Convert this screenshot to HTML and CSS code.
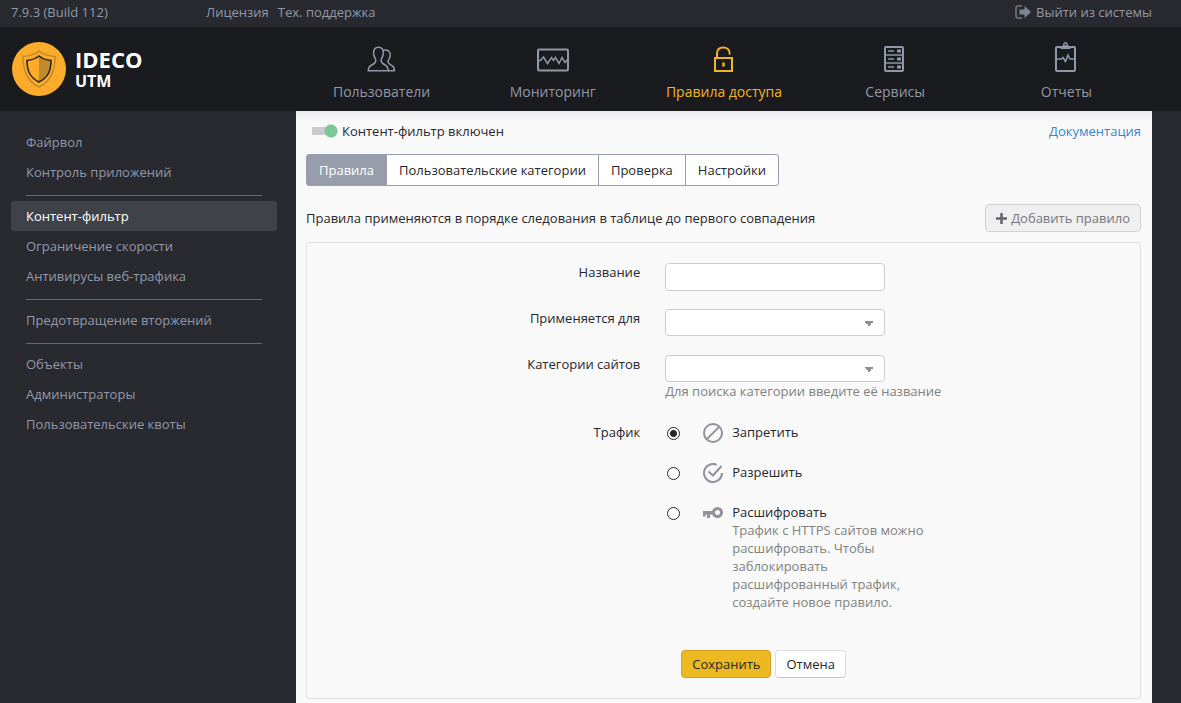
FILE: index.html
```html
<!DOCTYPE html>
<html lang="ru">
  <head>
    <meta charset="UTF-8" />
    <meta name="viewport" content="width=device-width, initial-scale=1.0" />
    <title>Контент-фильтр - Ideco UTM</title>
    <link rel="stylesheet" href="styles.css">
  </head>
  <body>
    <div class="topbar">
      <span class="version">7.9.3 (Build 112)</span>
      <div class="topbar-links">
        <a href="#">Лицензия</a>
        <a href="#">Тех. поддержка</a>
      </div>
      <a href="#" class="logout">
        <svg width="16" height="14" viewBox="0 0 16 14">
          <path d="M7 1H3a2 2 0 0 0-2 2v8a2 2 0 0 0 2 2h4" fill="none" stroke="#747985" stroke-width="1.500"/>
          <path d="M4.500 4.500h5V1l6.500 6-6.500 6V9.500h-5z" fill="#7d8794"/>
        </svg>
        Выйти из системы
      </a>
    </div>

    <header class="header">
      <a href="#" class="logo">
        <svg width="54" height="54" viewBox="0 0 54 54">
          <circle cx="27" cy="27" r="27" fill="#fcac2a"/>
          <path d="M27 9c4 3.500 10 5 16 5.500 0 13-3 24.500-16 30.500-13-6-16-17.500-16-30.500 6-.5 12-2 16-5.500z" fill="none" stroke="#c08a2a" stroke-width="1.500"/>
          <path d="M27 14v26c9-4.500 12-11 12-21.500-5-.5-9-2-12-4.500z" fill="#c08a2a"/>
          <path d="M27 14c3 2.500 7 4 12 4.500 0 10.500-3 17-12 21.500-9-4.500-12-11-12-21.500 5-.5 9-2 12-4.500z" fill="none" stroke="#24211f" stroke-width="1.500"/>
        </svg>
        <span class="logo-text">
          <span class="logo-name">IDECO</span>
          <span class="logo-product">UTM</span>
        </span>
      </a>
      <nav class="main-nav">
        <a href="#">
          <svg width="32" height="34" viewBox="0 -2 32 34" fill="none" stroke="#9198a9" stroke-width="1.500">
            <path d="M12.500 3.200c3.200 0 5 2 4.800 5.500 0 1.800-.2 3.300-1.200 4.800-.8 1.200-1.300 2.200-1 3.500.4 2 1.700 2.800 3.600 3.700 2.300 1 3.300 2.300 3.500 6H2.200c.2-3.700 1.700-5 4-6 1.900-.9 3.200-1.700 3.600-3.700.3-1.300-.3-2.300-1-3.500-1-1.500-1.200-3-1.200-4.800 0-3.500 1.700-5.500 4.900-5.500z"/>
            <path d="M17 6.300c4.200-1.200 7.300.7 7.200 4.700 0 1.800-.3 2.800-1.200 4.200-.8 1.200-1.200 2-.9 3 .4 1.500 1.500 2.100 3.200 3 2 1 3 2.300 3.200 5.500h-6.500"/>
          </svg>
          Пользователи
        </a>
        <a href="#">
          <svg width="32" height="34" viewBox="0 -2 32 34" fill="none" stroke="#9198a9">
            <rect x="1" y="5.500" width="30" height="21" rx="1" stroke-width="2"/>
            <path d="M1 16.500h2.500l3-3.500 4 6.500 4-6 2 3 2-3 3.500 6 3-6 3 5 2-2.500h1" stroke-width="1.500"/>
          </svg>
          Мониторинг
        </a>
        <a href="#" class="active">
          <svg width="32" height="34" viewBox="0 -2 32 34" fill="none" stroke="#f1b528" stroke-width="2">
            <rect x="7" y="14" width="17" height="13"/>
            <path d="M9 14v-4.500c0-4 2.800-6 6.300-6s6.300 2 6.300 5.500v1.500"/>
            <path d="M15.500 18.500v4" stroke-width="2.500"/>
          </svg>
          Правила доступа
        </a>
        <a href="#">
          <svg width="32" height="34" viewBox="0 -2 32 34" fill="none" stroke="#9198a9">
            <rect x="6" y="3" width="18" height="24" rx="1" stroke-width="2"/>
            <path d="M6 11h18M6 19h18" stroke-width="1.500"/>
            <path d="M9 7h6M9 15h6M9 23h6" stroke-width="1.500"/>
            <path d="M18 7h4M18 15h4M18 23h4" stroke-width="3"/>
          </svg>
          Сервисы
        </a>
        <a href="#">
          <svg width="32" height="34" viewBox="0 -2 32 34" fill="none" stroke="#9198a9">
            <rect x="6" y="3" width="19" height="24" rx="1" stroke-width="2"/>
            <path d="M10.500 5V2.500l2.500-1C13-.8 14-2 15.500-2S18-.8 18 1.500l2.500 1V5z" fill="#9198a9" stroke="none"/>
            <circle cx="15.500" cy=".5" r="1" fill="#1a1b1e" stroke="none"/>
            <path d="M6 15h5.500l1.500-1.500 2.500 4L18 11l2 4h5" stroke-width="1.500"/>
          </svg>
          Отчеты
        </a>
      </nav>
    </header>

    <div class="page">
      <aside class="sidebar">
        <a href="#">Файрвол</a>
        <a href="#">Контроль приложений</a>
        <hr>
        <a href="#" class="active">Контент-фильтр</a>
        <a href="#">Ограничение скорости</a>
        <a href="#">Антивирусы веб-трафика</a>
        <hr>
        <a href="#">Предотвращение вторжений</a>
        <hr>
        <a href="#">Объекты</a>
        <a href="#">Администраторы</a>
        <a href="#">Пользовательские квоты</a>
      </aside>

      <main class="content">
        <div class="content-head">
          <label class="switch">
            <input type="checkbox" checked>
            Контент-фильтр включен
          </label>
          <a href="#" class="doc-link">Документация</a>
        </div>

        <div class="tabs">
          <button type="button" class="active">Правила</button>
          <button type="button">Пользовательские категории</button>
          <button type="button">Проверка</button>
          <button type="button">Настройки</button>
        </div>

        <div class="rules-head">
          <span>Правила применяются в порядке следования в таблице до первого совпадения</span>
          <button type="button" class="btn" disabled>
            <svg width="11" height="11" viewBox="0 0 11 11">
              <path d="M5.500 0v11M0 5.500h11" stroke="#65656c" stroke-width="2.500"/>
            </svg>
            Добавить правило
          </button>
        </div>

        <form class="rule-form">
          <div class="form-row">
            <label class="form-label" for="name">Название</label>
            <div class="form-field">
              <input type="text" id="name" name="name">
            </div>
          </div>

          <div class="form-row">
            <label class="form-label" for="target">Применяется для</label>
            <div class="form-field">
              <select id="target" name="target"><option></option></select>
            </div>
          </div>

          <div class="form-row">
            <label class="form-label" for="category">Категории сайтов</label>
            <div class="form-field">
              <select id="category" name="category"><option></option></select>
              <div class="help">Для поиска категории введите её название</div>
            </div>
          </div>

          <div class="form-row traffic" role="radiogroup" aria-labelledby="trafficLabel">
            <span class="form-label" id="trafficLabel">Трафик</span>
            <div class="form-field">
              <label class="radio">
                <input type="radio" name="traffic" value="deny" checked>
                <svg width="20" height="20" viewBox="0 0 20 20" fill="none" stroke="#93909a" stroke-width="2">
                  <circle cx="10" cy="10" r="9"/>
                  <path d="M3.600 16.400 16.400 3.600"/>
                </svg>
                <span>Запретить</span>
              </label>
              <label class="radio">
                <input type="radio" name="traffic" value="allow">
                <svg width="20" height="20" viewBox="0 0 20 20" fill="none" stroke="#93909a" stroke-width="2">
                  <path d="M13.700 1.800A9 9 0 1 0 19 10"/>
                  <path d="M5.500 8.500 10 12.500 18.500 3"/>
                </svg>
                <span>Разрешить</span>
              </label>
              <label class="radio">
                <input type="radio" name="traffic" value="decrypt">
                <svg width="20" height="20" viewBox="0 0 20 20">
                  <circle cx="14.500" cy="9.500" r="4" fill="none" stroke="#93909a" stroke-width="3"/>
                  <path d="M0 8h10v3.500H7v3.500H4v-3.500H2.500v2H0z" fill="#93909a"/>
                </svg>
                <span>
                  Расшифровать
                  <span class="help">Трафик с HTTPS сайтов можно расшифровать. Чтобы заблокировать расшифрованный трафик, создайте новое правило.</span>
                </span>
              </label>
            </div>
          </div>

          <div class="form-row form-actions">
            <button type="submit" class="btn btn-primary">Сохранить</button>
            <button type="button" class="btn">Отмена</button>
          </div>
        </form>
      </main>
    </div>
  </body>
</html>
```
FILE: styles.css
```css
* {
  box-sizing: border-box;
}
body {
  margin: 0;
  min-height: 100vh;
  display: flex;
  flex-direction: column;
  font-family: "Open Sans", "Noto Sans", sans-serif;
  font-size: 13px;
  line-height: 18px;
  color: #26272c;
  background-color: #292a2f;
}
a {
  color: #9198a9;
  text-decoration: none;
}
svg {
  flex: none;
}
button,
input,
select {
  font: inherit;
  color: inherit;
}

/* top bar */
.topbar {
  display: flex;
  align-items: center;
  height: 27px;
  padding: 0 29px 3px 11px;
  color: #9198a9;
}
.version {
  width: 195px;
}
.topbar-links {
  display: flex;
  flex: 1;
  gap: 9px;
}
.logout {
  display: flex;
  align-items: center;
  gap: 5px;
}

/* header */
.header {
  display: flex;
  height: 84px;
  padding-right: 29px;
  background-color: #1a1b1e;
}
.logo {
  display: flex;
  align-items: center;
  gap: 9px;
  width: 296px;
  padding-left: 12px;
  color: #fff;
  font-weight: bold;
}
.logo-text {
  display: flex;
  flex-direction: column;
}
.logo-name {
  font-size: 22px;
  line-height: 24px;
}
.logo-product {
  font-size: 16px;
  line-height: 20px;
}
.main-nav {
  display: grid;
  grid-template-columns: repeat(5, 1fr);
  flex: 1;
}
.main-nav a {
  display: flex;
  flex-direction: column;
  align-items: center;
  gap: 7px;
  padding-top: 15px;
  font-size: 14px;
}
.main-nav .active {
  color: #f1b528;
}

/* layout */
.page {
  display: flex;
  flex: 1;
  padding-right: 29px;
}
.sidebar {
  width: 296px;
  padding: 16px 19px 16px 11px;
}
.sidebar a {
  display: block;
  padding: 6px 15px;
  border-radius: 3px;
}
.sidebar .active {
  color: #fff;
  background-color: #3f4248;
}
.sidebar hr {
  height: 1px;
  margin: 8px 15px 5px;
  border: none;
  background-color: #696a6e;
}
.content {
  flex: 1;
  padding: 11px 11px 4px 10px;
  background: linear-gradient(#ececf0, #f9f9f9 12px);
}
.content-head {
  display: flex;
  justify-content: space-between;
  margin-bottom: 14px;
}
.doc-link {
  color: #3a87c8;
}

/* switch */
.switch {
  display: flex;
  align-items: center;
  gap: 4px;
  height: 18px;
  padding-left: 6px;
}
.switch input {
  appearance: none;
  width: 26px;
  height: 14px;
  margin: 0;
  background:
    radial-gradient(circle at 19px 7px, #7ac798 6px, transparent 7px),
    linear-gradient(#cbcbcb, #cbcbcb) 0 3px / 18px 8px no-repeat;
  border-radius: 4px;
}

/* tabs */
.tabs {
  display: inline-flex;
  margin-bottom: 18px;
  border: 1px solid #989daf;
  border-radius: 3px;
  background-color: #fff;
}
.tabs button {
  height: 30px;
  padding: 0 12px;
  border: none;
  border-left: 1px solid #989daf;
  background: none;
}
.tabs button:first-child {
  border-left: none;
}
.tabs .active {
  color: #fff;
  background-color: #989dab;
}

.rules-head {
  display: flex;
  align-items: center;
  justify-content: space-between;
  margin-bottom: 10px;
}

.btn {
  display: inline-flex;
  align-items: center;
  gap: 4px;
  height: 28px;
  padding: 0 10px;
  border: 1px solid #dcdce0;
  border-bottom-color: #c4c4cc;
  border-radius: 4px;
  background-color: #fff;
}
.btn:disabled {
  color: #77777d;
  border-color: #d2d2d4;
  background-color: #efeff0;
}
.btn-primary {
  border-color: #d89b28;
  background-color: #ecb920;
}

/* rule form */
.rule-form {
  padding: 20px 0;
  border: 1px solid #e0e0e0;
  border-radius: 3px;
}
.form-row {
  display: flex;
  min-height: 28px;
  margin-bottom: 18px;
}
.form-label {
  width: 40%;
  text-align: right;
}
.form-field {
  flex: 1;
  padding-left: 25px;
}
.form-field input[type="text"],
.form-field select {
  display: block;
  width: 220px;
  height: 28px;
  padding: 0 8px;
  border: 1px solid #cccccc;
  border-radius: 4px;
  background-color: #fff;
}
.form-field select {
  appearance: none;
  height: 27px;
  background-image:
    linear-gradient(to top right, transparent 50%, #918e98 50%),
    linear-gradient(to top left, transparent 50%, #918e98 50%);
  background-position: right 15px top 11px, right 10px top 11px;
  background-size: 5px 5px;
  background-repeat: no-repeat;
}
.help {
  display: block;
  color: #80827f;
}
.traffic {
  margin-top: 23px;
}
.radio {
  display: flex;
  align-items: flex-start;
  width: 268px;
  min-height: 40px;
}
.radio input {
  appearance: none;
  flex: none;
  width: 13px;
  height: 13px;
  margin: 4px 23px 0 2px;
  border: 1px solid #26272c;
  border-radius: 50%;
  background-color: #fff;
}
.radio input:checked {
  background-image: radial-gradient(circle, #26272c 3px, transparent 4px);
}
.radio svg {
  margin-right: 9px;
}
.form-actions {
  gap: 4px;
  margin: 39px 0 0;
  padding-left: calc(40% + 41px);
}
```
